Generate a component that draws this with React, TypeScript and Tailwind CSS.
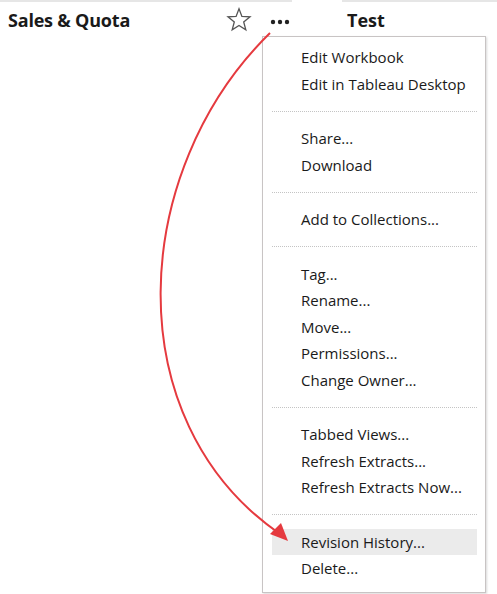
import React from "react";

const groups: string[][] = [
  ["Edit Workbook", "Edit in Tableau Desktop"],
  ["Share...", "Download"],
  ["Add to Collections..."],
  ["Tag...", "Rename...", "Move...", "Permissions...", "Change Owner..."],
  ["Tabbed Views...", "Refresh Extracts...", "Refresh Extracts Now..."],
  ["Revision History...", "Delete..."],
];

function Star() {
  return (
    <svg width="26" height="26" viewBox="0 0 26 26" fill="none">
      <path
        d="M13 1.8 L15.9 9.4 L24 9.8 L17.7 14.9 L19.8 22.8 L13 18.4 L6.2 22.8 L8.3 14.9 L2 9.8 L10.1 9.4 Z"
        stroke="#555"
        strokeWidth="1.3"
        strokeLinejoin="miter"
      />
    </svg>
  );
}

function Dots() {
  return (
    <svg width="20" height="8" viewBox="0 0 20 8">
      <circle cx="3" cy="4" r="2.2" fill="#222" />
      <circle cx="10" cy="4" r="2.2" fill="#222" />
      <circle cx="17" cy="4" r="2.2" fill="#222" />
    </svg>
  );
}

export default function App() {
  return (
    <div
      className="relative w-[497px] h-[594px] bg-white overflow-hidden text-[#1a1a1a]"
      style={{ fontFamily: '"Open Sans", "Noto Sans", sans-serif' }}
    >
      <div className="flex h-[2px]">
        <div className="w-[292px] bg-[#e6e6e6]" />
        <div className="w-[50px]" />
        <div className="flex-1 bg-[#e6e6e6]" />
      </div>
      <div className="flex items-center h-[36px] pl-[8px]">
        <div className="w-[218px] text-[18px] font-bold tracking-[-0.2px]">Sales &amp; Quota</div>
        <Star />
        <div className="ml-[18px] w-[20px] flex items-center mt-[4px]">
          <Dots />
        </div>
        <div className="ml-[57px] text-[18px] font-bold">Test</div>
      </div>

      <div className="absolute left-[262px] top-[36px] w-[224px] h-[557px] border border-[#c8c4c4] bg-white shadow-[1px_1px_2px_rgba(0,0,0,0.15)] pt-[7px] pl-[9px] pr-[8px]">
        {groups.map((g, gi) => (
          <div key={gi}>
            {gi > 0 && (
              <div className="h-[28px] flex items-center">
                <div className="w-full border-t border-dotted border-[#c4c4c4]" />
              </div>
            )}
            {g.map((item) => (
              <div
                key={item}
                className={`h-[26.5px] flex items-center pl-[29px] text-[15px] ${
                  item === "Revision History..." ? "bg-[#ebebeb]" : ""
                }`}
              >
                {item}
              </div>
            ))}
          </div>
        ))}
      </div>

      <svg className="absolute left-0 top-0 pointer-events-none" width="497" height="594">
        <path d="M270 33 C 130 170, 115 420, 280 534" stroke="#e53a3f" strokeWidth="2" fill="none" />
        <polygon points="288,541 270,534 281,523" fill="#e53a3f" />
      </svg>
    </div>
  );
}
